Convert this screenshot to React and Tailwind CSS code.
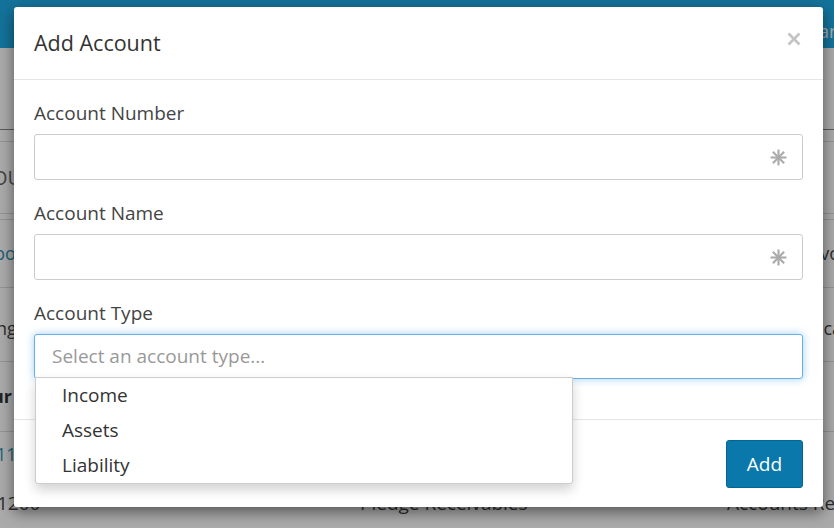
import React from "react";

function Asterisk() {
  return (
    <svg width="17" height="17" viewBox="0 0 16 16" className="shrink-0">
      <g stroke="#ababab" strokeWidth="2" strokeLinecap="butt">
        <line x1="8" y1="0.5" x2="8" y2="15.5" />
        <line x1="0.5" y1="8" x2="15.5" y2="8" />
        <line x1="2.7" y1="2.7" x2="13.3" y2="13.3" />
        <line x1="13.3" y1="2.7" x2="2.7" y2="13.3" />
      </g>
    </svg>
  );
}

function CloseIcon() {
  return (
    <svg width="14" height="14" viewBox="0 0 14 14">
      <g stroke="#c4c4c4" strokeWidth="2.6" strokeLinecap="butt">
        <line x1="1.5" y1="1.5" x2="12.5" y2="12.5" />
        <line x1="12.5" y1="1.5" x2="1.5" y2="12.5" />
      </g>
    </svg>
  );
}

function Field({ label }) {
  return (
    <div className="flex flex-col gap-2">
      <label className="h-[26px] text-[19px] leading-[26px] text-[#444]">{label}</label>
      <div className="flex h-[46px] items-center justify-end rounded-[3px] border border-[#cccccc] bg-white pr-[15px]">
        <Asterisk />
      </div>
    </div>
  );
}

function BackgroundPage() {
  return (
    <div className="flex h-full w-full flex-col whitespace-nowrap bg-white font-['Open_Sans',sans-serif]">
      <div className="flex h-[48px] shrink-0 items-start justify-end bg-[#1eace7] pt-[18px] text-[18px] text-white">
        <span className="-mr-[6px]">an</span>
      </div>
      <div className="h-[82px] shrink-0 border-b border-[#888]" />
      <div className="h-[12px] shrink-0 border-b border-[#ddd]" />
      <div className="flex h-[72px] shrink-0 items-center justify-between border-b border-[#ddd] text-[20px] text-[#666]">
        <span className="-ml-[8px]">OU</span>
      </div>
      <div className="h-[6px] shrink-0 border-b border-[#ddd]" />
      <div className="flex h-[68px] shrink-0 items-center justify-between border-b border-[#ddd] text-[18px] text-[#2f8fb6]">
        <span className="-ml-[6px]">bo</span>
        <span className="-mr-[6px] text-[#444]">vo</span>
      </div>
      <div className="h-[8px] shrink-0" />
      <div className="flex h-[66px] shrink-0 items-center justify-between border-b border-[#ddd] text-[18px] text-[#444]">
        <span className="-ml-[4px]">ng</span>
        <span className="-mr-[8px]">ca</span>
      </div>
      <div className="flex h-[70px] shrink-0 items-center border-b border-[#ddd] text-[18px] font-bold text-[#333]">
        <span className="-ml-[8px]">ur</span>
      </div>
      <div className="flex h-[44px] shrink-0 items-center text-[18px] text-[#2f8fb6]">
        <span className="-ml-[4px]">11</span>
      </div>
      <div className="flex h-[54px] shrink-0 items-center text-[19px] text-[#444]">
        <span className="-ml-[3px] w-[363px] shrink-0">1200</span>
        <span className="w-[367px] shrink-0">Pledge Receivables</span>
        <span className="shrink-0">Accounts Re</span>
      </div>
    </div>
  );
}

export default function App() {
  return (
    <div className="relative h-[528px] w-[834px] overflow-hidden font-['Open_Sans',sans-serif]">
      <BackgroundPage />
      <div className="absolute inset-0 bg-black/[0.33]" />

      <div className="absolute left-[14px] top-[7px] flex w-[809px] flex-col rounded-[3px] bg-white shadow-[0_5px_15px_rgba(0,0,0,0.5)]">
        <div className="flex h-[73px] items-center justify-between border-b border-[#e5e5e5] pl-[20px] pr-[22px]">
          <h4 className="text-[21.5px] leading-[28px] text-[#333]">Add Account</h4>
          <span className="mt-[-8px]">
            <CloseIcon />
          </span>
        </div>

        <div className="flex flex-col gap-[20px] px-[20px] pb-[40px] pt-[20px]">
          <Field label="Account Number" />
          <Field label="Account Name" />
          <div className="flex flex-col gap-2">
            <label className="h-[26px] text-[19px] leading-[26px] text-[#444]">Account Type</label>
            <div className="relative">
              <div className="flex h-[45px] items-center rounded-[3px] border border-[#66afe9] bg-white pl-[17px] text-[19px] text-[#999] shadow-[0_0_8px_rgba(102,175,233,0.6)]">
                Select an account type...
              </div>
              <ul className="absolute left-[1px] top-[43px] z-10 w-[538px] rounded-b-[3px] border border-[#cccccc] bg-white text-[19px] text-[#333] shadow-[0_6px_12px_rgba(0,0,0,0.175)]">
                <li className="flex h-[35px] items-center pl-[26px]">Income</li>
                <li className="flex h-[35px] items-center pl-[26px]">Assets</li>
                <li className="flex h-[35px] items-center pl-[26px]">Liability</li>
              </ul>
            </div>
          </div>
        </div>

        <div className="flex justify-end border-t border-[#e5e5e5] px-[20px] pb-[19px] pt-[20px]">
          <button className="flex h-[48px] w-[77px] items-center justify-center rounded-[3px] border border-[#036592] bg-[#0a78aa] text-[19px] text-white">
            Add
          </button>
        </div>
      </div>
    </div>
  );
}
